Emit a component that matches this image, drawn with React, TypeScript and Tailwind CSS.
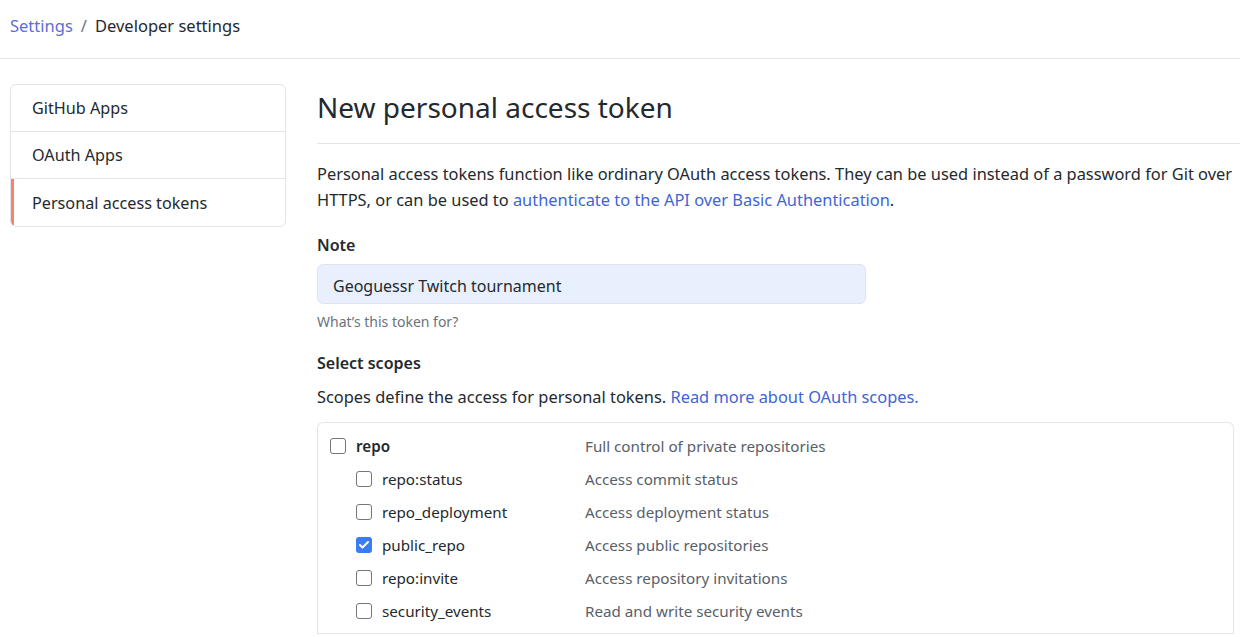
import { Check } from "lucide-react";

const SIDE = ["GitHub Apps", "OAuth Apps", "Personal access tokens"];

const SCOPES = [
  { name: "repo", desc: "Full control of private repositories", top: true },
  { name: "repo:status", desc: "Access commit status" },
  { name: "repo_deployment", desc: "Access deployment status" },
  { name: "public_repo", desc: "Access public repositories", checked: true },
  { name: "repo:invite", desc: "Access repository invitations" },
  { name: "security_events", desc: "Read and write security events" },
];

function Box({ checked }: { checked?: boolean }) {
  return checked ? (
    <span className="flex h-[16px] w-[16px] items-center justify-center rounded-[3px] bg-[#3b7df0]">
      <Check size={12} strokeWidth={4} className="text-white" />
    </span>
  ) : (
    <span className="h-[16px] w-[16px] rounded-[3px] border border-[#767676] bg-white" />
  );
}

export default function App() {
  return (
    <div
      className="min-h-[637px] bg-white text-[#24292e]"
      style={{ fontFamily: '"Noto Sans", "Segoe UI", sans-serif' }}
    >
      {/* Breadcrumb */}
      <div className="flex h-[59px] items-center border-b border-[#e1e4e8] px-[10px] pb-[6px] text-[16.5px]">
        <a className="text-[#5b6fd8]">Settings</a>
        <span className="mx-[8px] text-[#6a737d]">/</span>
        <span>Developer settings</span>
      </div>

      <div className="flex gap-[31px] pl-[10px] pt-[25px]">
        {/* Sidebar */}
        <nav className="w-[276px] shrink-0 self-start overflow-hidden rounded-[6px] border border-[#e1e4e8]">
          {SIDE.map((s, i) => (
            <div
              key={s}
              className={`flex h-[47px] items-center px-[21px] pt-[1px] text-[16.2px] ${
                i < SIDE.length - 1 ? "border-b border-[#e1e4e8]" : ""
              } ${i === 2 ? "border-l-[3px] border-l-[#f9826c] pl-[18px]" : ""}`}
            >
              {s}
            </div>
          ))}
        </nav>

        {/* Main */}
        <main className="min-w-0 flex-1">
          <h1 className="border-b border-[#e1e4e8] pb-[14px] pt-[1px] text-[28px] font-normal leading-[44px]">
            New personal access token
          </h1>
          <p className="mt-[17px] whitespace-nowrap text-[16.4px] leading-[26px]">
            Personal access tokens function like ordinary OAuth access tokens. They can be used instead of a password for Git over
            <br />
            HTTPS, or can be used to{" "}
            <a className="text-[#4064d6]">authenticate to the API over Basic Authentication</a>.
          </p>

          <div className="mt-[20px] text-[16px] font-semibold">Note</div>
          <div className="mt-[7px] flex h-[40px] w-[549px] items-center rounded-[6px] border border-[#dfe3ec] bg-[#e8f0fe] px-[15px] pt-[4px] text-[16px]">
            Geoguessr Twitch tournament
          </div>
          <div className="mt-[7px] text-[14px] text-[#6a737d]">What’s this token for?</div>

          <div className="mt-[19px] text-[16px] font-semibold">Select scopes</div>
          <p className="mt-[10px] text-[16.4px]">
            Scopes define the access for personal tokens.{" "}
            <a className="text-[#4064d6]">Read more about OAuth scopes.</a>
          </p>

          <div className="mt-[12px] mr-[6px] rounded-t-[6px] border border-b-0 border-[#e1e4e8] pt-[7px]">
            {SCOPES.map((s) => (
              <div key={s.name} className="flex h-[33px] items-center text-[15.2px]">
                <div className={`flex w-[267px] items-center gap-[10px] ${s.top ? "pl-[12px]" : "pl-[38px]"}`}>
                  <Box checked={s.checked} />
                  <span className={s.top ? "font-semibold" : ""}>{s.name}</span>
                </div>
                <span className="text-[#586069]">{s.desc}</span>
              </div>
            ))}
            <div className="mt-[5px] border-b border-[#e1e4e8]" />
          </div>
        </main>
      </div>
    </div>
  );
}
